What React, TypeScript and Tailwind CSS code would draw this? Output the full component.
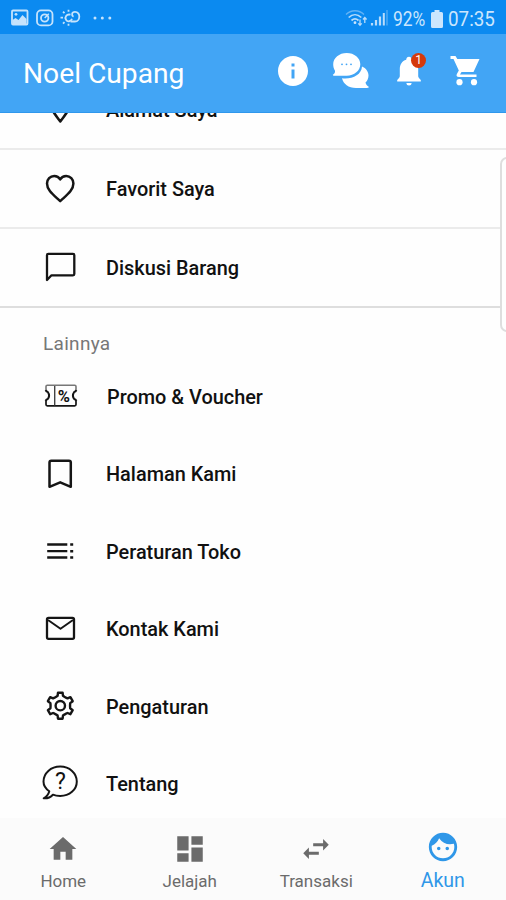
import React from 'react';
import {
  MdInfo,
  MdHome,
  MdDashboard,
  MdSwapHoriz,
  MdFace,
} from 'react-icons/md';

interface MenuItem {
  label: string;
  icon: React.ReactNode;
}

// Shared frame for the line icons in the menu
const LineIcon: React.FC<{ children: React.ReactNode }> = ({ children }) => (
  <svg width="36" height="36" viewBox="0 0 36 36" fill="none" stroke="#151515" strokeWidth="2.3" strokeLinejoin="round" className="shrink-0">
    {children}
  </svg>
);

const PinIcon: React.FC = () => (
  <LineIcon>
    <path d="M18.300 29.500C12.500 22 8.800 17 8.800 12.300C8.800 7 13 3 18.300 3S27.800 7 27.800 12.300C27.800 17 24.100 22 18.300 29.500Z" strokeWidth="2.500" />
    <circle cx="18.300" cy="12.300" r="3" />
  </LineIcon>
);

const HeartIcon: React.FC = () => (
  <LineIcon>
    <path d="M18.200 30.200L15.500 27.700C9.500 22.200 5 18.200 5 12.500C5 8.200 8.200 5 12.200 5C14.600 5 16.900 6.200 18.200 8.400C19.500 6.200 21.800 5 24.200 5C28.200 5 31.400 8.200 31.400 12.500C31.400 18.200 26.900 22.200 20.900 27.700Z" strokeWidth="2.500" />
  </LineIcon>
);

const ChatIcon: React.FC = () => (
  <LineIcon>
    <path d="M5 30V5.200Q5 3.900 6.300 3.900H31Q32.300 3.900 32.300 5.200V24Q32.300 25.300 31 25.300H9.500Z" />
  </LineIcon>
);

const BookmarkIcon: React.FC = () => (
  <LineIcon>
    <path d="M7.500 31.800V7.500Q7.500 5.700 9.300 5.700H27Q28.800 5.700 28.800 7.500V31.800L18.200 27.300Z" strokeWidth="2.500" />
  </LineIcon>
);

const TocIcon: React.FC = () => (
  <LineIcon>
    <path d="M5.200 11.500H25.300M5.200 18.200H25.300M5.200 24.500H25.300" />
    <path d="M28.200 11.500H31.200M28.200 18.200H31.200M28.200 24.500H31.200" strokeWidth="2.600" />
  </LineIcon>
);

const MailIcon: React.FC = () => (
  <LineIcon>
    <rect x="5" y="7.800" width="27" height="21" rx="1.500" />
    <path d="M6 10L18.500 18.700L31 10" strokeWidth="2" />
  </LineIcon>
);

// Six-toothed gear outline, one tooth every 60 degrees
const gearPath = (() => {
  const tooth = [[-4.1, -8.9], [-2.7, -9.9], [-2.3, -13], [2.3, -13], [2.7, -9.9], [4.1, -8.9]];
  const points: string[] = [];
  for (let i = 0; i < 6; i++) {
    const a = (i * Math.PI) / 3;
    tooth.forEach(([x, y]) => {
      const px = 18.3 + x * Math.cos(a) - y * Math.sin(a);
      const py = 17.7 + x * Math.sin(a) + y * Math.cos(a);
      points.push(`${px.toFixed(2)} ${py.toFixed(2)}`);
    });
  }
  return `M${points.join('L')}Z`;
})();

const GearIcon: React.FC = () => (
  <LineIcon>
    <path d={gearPath} strokeWidth="2.400" />
    <circle cx="18.300" cy="17.700" r="4.700" strokeWidth="2.400" />
  </LineIcon>
);

const VoucherIcon: React.FC = () => (
  <LineIcon>
    <path d="M4 12V8.600Q4 7.300 5.300 7.300H32.700Q34 7.300 34 8.600V12" stroke="#777" strokeWidth="1.600" />
    <path d="M3.700 12Q4 13.400 5.800 14Q8.300 17.500 5.800 21Q4 21.600 3.700 23M34.300 12Q34 13.400 32.200 14Q29.700 17.500 32.200 21Q34 21.600 34.300 23" strokeWidth="2" />
    <path d="M4 23V26.600Q4 27.900 5.300 27.900H32.700Q34 27.900 34 26.600V23" strokeWidth="1.700" />
    <path d="M12.700 8V27.500" stroke="#444" strokeWidth="1.400" />
    <text x="21.800" y="23.500" fontSize="16.500" fontWeight="700" fontFamily="Roboto, sans-serif" textAnchor="middle" fill="#111" stroke="none">%</text>
  </LineIcon>
);

const HelpBubbleIcon: React.FC = () => (
  <LineIcon>
    <path d="M7.300 26.300C3.300 23.500 1.500 20.200 1.500 16.500C1.500 8.200 8.800 1.500 18.200 1.500S34.800 8.200 34.800 16.500S27.500 31 18.200 31C15.500 31 13 30.600 10.900 29.700C8.500 32.300 5.500 33.600 1.700 33.300C4.700 31.600 6.500 29.300 7.300 26.300Z" strokeWidth="2" />
    <text x="18.500" y="24.300" fontSize="23" fontWeight="400" fontFamily="Roboto, sans-serif" textAnchor="middle" fill="#111" stroke="none">?</text>
  </LineIcon>
);

const ChatsIcon: React.FC = () => (
  <svg width="38" height="38" viewBox="0 0 38 38" fill="#fff">
    <path d="M30 14.500C34 16.300 36.500 19.600 36.500 23.500C36.500 26.400 35.300 28.800 33.500 30.600C33.800 32.400 35 34 37 35C36.500 35.700 35.500 36 34 36H24C16.500 36 11.300 32 10 26.300C20 27.500 29.500 23 30 14.500Z" />
    <path d="M14.700 1C22.300 1 28.300 5.900 28.300 12.200S22.300 23.700 14.700 23.700H2.500C1.300 23.700 0.800 23.200 0.800 22.700C2.600 21.800 3.200 20.300 3 18.700C1.800 16.900 1.200 14.700 1.200 12.200C1.200 5.900 7.200 1 14.700 1Z" />
    <g fill="#42a5f5">
      <circle cx="10" cy="12.300" r="0.900" />
      <circle cx="14.500" cy="12.300" r="0.900" />
      <circle cx="19" cy="12.300" r="0.900" />
    </g>
  </svg>
);

const BellIcon: React.FC = () => (
  <svg width="36" height="36" viewBox="0 0 36 36" fill="#fff">
    <path d="M18 3.800C16.300 3.800 15.400 5 15.200 6.700C11 8 8.800 11.500 8.800 16V23.200C8.800 24.800 7 25.800 6.200 27V28.500H29.800V27C29 25.800 27.200 24.800 27.200 23.200V16C27.200 11.500 25 8 20.800 6.700C20.600 5 19.700 3.800 18 3.800Z" />
    <path d="M15.300 30H20.700Q20.500 32.500 18 32.500T15.300 30Z" />
  </svg>
);

const CartIcon: React.FC = () => (
  <svg width="36" height="36" viewBox="0 0 36 36" fill="#fff">
    <path d="M2.500 3H7.500L9.300 6H31.500L25.500 19H13.500L12 21.500H28.500V24H11C8.500 24 8 22.500 9 20.800L10.800 17.500L5.500 6H2.500Z" />
    <circle cx="11.500" cy="29.200" r="3.100" />
    <circle cx="26" cy="29.200" r="3.100" />
  </svg>
);

const StatusLeft: React.FC = () => (
  <svg width="104" height="20" viewBox="0 0 104 20" fill="none" stroke="#c5e3fc" strokeWidth="1.800">
    <rect x="2" y="1.500" width="15.500" height="14" rx="1" />
    <path d="M2.500 14V11L5.500 9L8.500 11L12.500 6L16.500 10V15H2.500Z" fill="#c5e3fc" stroke="none" />
    <circle cx="6" cy="5.300" r="1.400" fill="#c5e3fc" stroke="none" />
    <rect x="27" y="1.400" width="15.500" height="15" rx="4" />
    <circle cx="34.700" cy="9" r="3.700" />
    <path d="M34.700 9L38.800 4.800" strokeWidth="1.500" />
    <path d="M60.500 12.500H65C70.500 12.500 71 2.900 65 2.900C61.500 2.900 61.300 6.700 63.500 7.700" />
    <path d="M60.500 5.700C56.500 4.700 54.500 8.200 56 10.700S61 12.700 62 9.700" />
    <path d="M58.500 0.700V2.700M53 2.700L54.500 4.200M50.500 8.700H53M53 14.700L54.500 13.200M58.500 14.700V16.700" />
    <g fill="#c5e3fc" stroke="none">
      <circle cx="85" cy="9" r="1.500" />
      <circle cx="92.300" cy="9" r="1.500" />
      <circle cx="99.800" cy="9" r="1.500" />
    </g>
  </svg>
);

const StatusRight: React.FC = () => (
  <div className="flex items-center text-[#cbe6fd]">
    <svg width="43" height="20" viewBox="0 0 43 20" fill="none" stroke="#b9dcfb">
      <path d="M1 5.500C6 0.500 14 0.500 19 5.500" strokeWidth="1.400" opacity="0.500" />
      <path d="M3.700 8.500C7.500 4.800 12.500 4.800 16.300 8.500" strokeWidth="1.700" />
      <path d="M6.500 11.500C9 9.200 11 9.200 13.500 11.500" strokeWidth="1.700" />
      <circle cx="10" cy="13.700" r="1.400" fill="#cbe6fd" stroke="none" />
      <path d="M15 10.500V16M13.300 14.300L15 16.300L16.700 14.300M19.800 14V9M18 10.500L19.800 8.500L21.600 10.500" strokeWidth="1.300" />
      <path d="M27 16.500V14M31 16.500V11M35 16.500V7.500" strokeWidth="2.200" />
      <path d="M38.800 16.500V4" strokeWidth="2" />
      <path d="M42 16.500V1" strokeWidth="1.200" opacity="0.500" />
    </svg>
    <span className="ml-[5px] w-[33px] text-[20px] leading-none">
      <span className="inline-block origin-left scale-x-[0.87]">92%</span>
    </span>
    <svg className="ml-[5px]" width="12" height="18" viewBox="0 0 12 18" fill="#cbe6fd">
      <path d="M3.500 0H8.500V2H10.500Q12 2 12 3.500V16.500Q12 18 10.500 18H1.500Q0 18 0 16.500V3.500Q0 2 1.500 2H3.500Z" />
    </svg>
    <span className="ml-[5px] w-[46px] text-[20px] leading-none">
      <span className="inline-block origin-left scale-x-[0.94]">07:35</span>
    </span>
  </div>
);

const accountItems: MenuItem[] = [
  { label: 'Alamat Saya', icon: <PinIcon /> },
  { label: 'Favorit Saya', icon: <HeartIcon /> },
  { label: 'Diskusi Barang', icon: <ChatIcon /> },
];

const otherItems: MenuItem[] = [
  { label: 'Promo & Voucher', icon: <VoucherIcon /> },
  { label: 'Halaman Kami', icon: <BookmarkIcon /> },
  { label: 'Peraturan Toko', icon: <TocIcon /> },
  { label: 'Kontak Kami', icon: <MailIcon /> },
  { label: 'Pengaturan', icon: <GearIcon /> },
  { label: 'Tentang', icon: <HelpBubbleIcon /> },
];

const tabs = [
  { label: 'Home', icon: <MdHome size={32} />, active: false },
  { label: 'Jelajah', icon: <MdDashboard size={34} />, active: false },
  { label: 'Transaksi', icon: <MdSwapHoriz size={34} />, active: false },
  { label: 'Akun', icon: <MdFace size={34} />, active: true },
];

const App: React.FC = () => {
  return (
    <div className="relative flex h-[900px] w-[506px] flex-col overflow-hidden bg-[#fefefe] font-['Roboto',sans-serif] text-[#111]">
      {/* Status bar */}
      <div className="flex h-[34px] shrink-0 items-center justify-between bg-[#0b8af0] pr-[12px] pl-[10px] pt-[3px]">
        <StatusLeft />
        <StatusRight />
      </div>

      {/* App bar */}
      <header className="flex h-[79px] shrink-0 items-center border-b border-[#2f97ec] bg-[#42a5f5] pl-[23px] text-white">
        <h1 className="w-[252px] pt-[2px] text-[28.200px] leading-none">Noel Cupang</h1>
        <div className="flex items-center pb-[5px]">
          <MdInfo size={36} />
          <div className="ml-[21px]"><ChatsIcon /></div>
          <div className="relative ml-[21px]">
            <BellIcon />
            <span className="absolute top-0 left-[20px] flex h-[15px] w-[15px] items-center justify-center rounded-full bg-[#d5390c] text-[12px] leading-none">
              1
            </span>
          </div>
          <div className="ml-[21px]"><CartIcon /></div>
        </div>
      </header>

      {/* Menu list, scrolled down a little */}
      <main className="min-h-0 flex-1 overflow-hidden">
        <div className="-mt-[42px] border-b-2 border-[#dedede]">
          {accountItems.map((item) => (
            <div key={item.label} className="flex h-[79px] items-center border-b-2 border-[#ebebeb] pl-[42px] last:h-[77px] last:border-0">
              {item.icon}
              <span className="ml-[28px] pt-[2px] text-[19.900px] font-medium">{item.label}</span>
            </div>
          ))}
        </div>
        <p className="mt-[22px] pl-[43px] text-[19px] leading-[28px] tracking-[0.3px] text-[#777]">Lainnya</p>
        <div className="-mt-px">
          {otherItems.map((item) => (
            <div key={item.label} className="group flex h-[77.5px] items-center pl-[42px]">
              {item.icon}
              <span className="ml-[28px] pt-[4px] text-[19.900px] font-medium group-first:ml-[29px]">{item.label}</span>
            </div>
          ))}
        </div>
      </main>

      {/* Bottom tabs */}
      <nav className="grid h-[82px] shrink-0 grid-cols-4 bg-[#fbfbfb]">
        {tabs.map((tab) => (
          <div key={tab.label} className={`flex flex-col items-center ${tab.active ? 'pt-[12px] text-[#2f97e8]' : 'pt-[14px] text-[#6b6b6b]'}`}>
            <div className="flex h-[34px] items-center">{tab.icon}</div>
            <span className={tab.active ? 'text-[19.500px] leading-[33px]' : 'text-[17px] leading-[30px]'}>{tab.label}</span>
          </div>
        ))}
      </nav>

      {/* Edge panel handle */}
      <div className="absolute top-[157px] -right-[8px] h-[175px] w-[14px] rounded-[7px] border-2 border-[#dedede] bg-[#fefefe]" />
    </div>
  );
};

export default App;
